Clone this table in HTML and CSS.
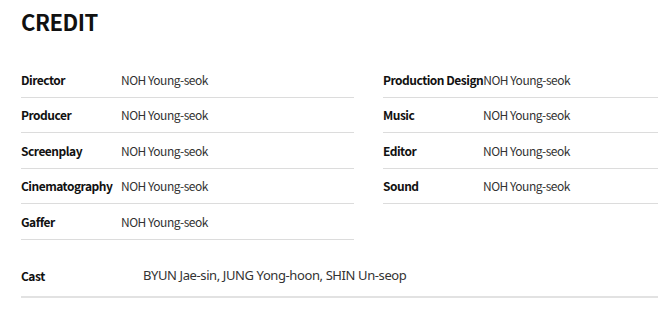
FILE: index.html
```html
<!DOCTYPE html>
<html lang="en">
<head>
<meta charset="utf-8">
<link rel="stylesheet" href="styles.css">
</head>
<body>
<section class="credit">
  <h2 class="title">CREDIT</h2>
  <div class="grid">
    <ul class="col">
      <li class="row"><span class="label">Director</span><span class="value">NOH Young-seok</span></li>
      <li class="row"><span class="label">Producer</span><span class="value">NOH Young-seok</span></li>
      <li class="row"><span class="label">Screenplay</span><span class="value">NOH Young-seok</span></li>
      <li class="row"><span class="label">Cinematography</span><span class="value">NOH Young-seok</span></li>
      <li class="row"><span class="label">Gaffer</span><span class="value">NOH Young-seok</span></li>
    </ul>
    <ul class="col">
      <li class="row"><span class="label">Production Design</span><span class="value">NOH Young-seok</span></li>
      <li class="row"><span class="label">Music</span><span class="value">NOH Young-seok</span></li>
      <li class="row"><span class="label">Editor</span><span class="value">NOH Young-seok</span></li>
      <li class="row"><span class="label">Sound</span><span class="value">NOH Young-seok</span></li>
    </ul>
  </div>
  <div class="cast">
    <span class="label cast-label">Cast</span><span class="cast-value">BYUN Jae-sin, JUNG Yong-hoon, SHIN Un-seop</span>
  </div>
</section>
</body>
</html>
```
FILE: styles.css
```css
html, body {
  margin: 0;
  padding: 0;
  background: #fff;
  overflow: hidden;
}
body {
  font-family: "Noto Sans CJK KR", "Noto Sans", sans-serif;
  color: #222;
}
.credit {
  width: 637px;
  padding: 0 0 0 21px;
}
.title {
  margin: 0;
  padding-top: 4px;
  font-size: 22px;
  font-weight: 700;
  line-height: 34px;
  color: #111;
  letter-spacing: -0.5px;
}
.grid {
  display: grid;
  grid-template-columns: 333px 1fr;
  column-gap: 29px;
  margin-top: 24px;
  align-items: start;
}
.col {
  list-style: none;
  margin: 0;
  padding: 0;
}
.row {
  display: flex;
  align-items: center;
  padding: 7.5px 0;
  border-bottom: 1px solid #dcdcdc;
  font-size: 12px;
  line-height: 19.5px;
}
.label {
  flex: 0 0 100px;
  font-weight: 700;
  color: #111;
  white-space: nowrap;
  letter-spacing: -0.5px;
}
.value {
  color: #333;
  letter-spacing: -0.5px;
}
.cast {
  display: flex;
  align-items: center;
  margin-top: 19px;
  padding: 7.5px 0 10.5px;
  border-bottom: 2px solid #e2e2e2;
  font-size: 12px;
  line-height: 19.5px;
}
.cast-label {
  flex: 0 0 122px;
}
.cast-value {
  font-family: "Noto Sans", sans-serif;
  font-size: 13px;
  letter-spacing: -0.4px;
  color: #333;
}
```
